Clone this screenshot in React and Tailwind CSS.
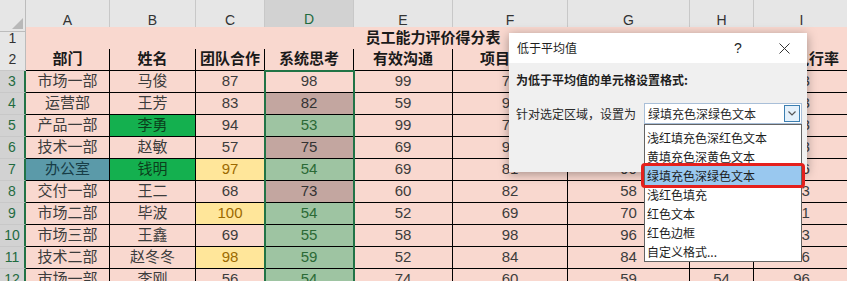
import React from 'react';
import clsx from 'clsx';

const grid = 'grid grid-cols-[26px_84px_86px_69px_89px_99px_115px_122px_64px_96px] w-[850px]';

const letters = ['A', 'B', 'C', 'D', 'E', 'F', 'G', 'H', 'I'];
const heads = ['部门', '姓名', '团队合作', '系统思考', '有效沟通', '项目管理', '创新能力', '学习力', '计划执行率'];

// a/b/c = cell fills, d = state of the selected column
const rows = [
  { n: 3, v: ['市场一部', '马俊', '87', '98', '99', '76', '85', '90', '93'], d: 'active' },
  { n: 4, v: ['运营部', '王芳', '83', '82', '59', '95', '78', '88', '83'], d: 'hi' },
  { n: 5, v: ['产品一部', '李勇', '94', '53', '99', '72', '81', '67', '98'], d: 'low', b: 'green' },
  { n: 6, v: ['技术一部', '赵敏', '57', '75', '69', '93', '66', '79', '88'], d: 'hi' },
  { n: 7, v: ['办公室', '钱明', '97', '54', '69', '81', '90', '58', '76'], d: 'low', a: 'teal', b: 'green', c: 'yellow' },
  { n: 8, v: ['交付一部', '王二', '68', '73', '60', '82', '58', '91', '83'], d: 'hi' },
  { n: 9, v: ['市场二部', '毕波', '100', '54', '52', '69', '70', '87', '91'], d: 'low', c: 'yellow' },
  { n: 10, v: ['市场三部', '王鑫', '69', '55', '58', '98', '96', '62', '73'], d: 'low' },
  { n: 11, v: ['技术二部', '赵冬冬', '98', '59', '52', '84', '84', '85', '86'], d: 'low', c: 'yellow' },
  { n: 12, v: ['市场一部', '李刚', '56', '54', '74', '60', '59', '54', '96'], d: 'low' },
];

const options = [
  '浅红填充色深红色文本',
  '黄填充色深黄色文本',
  '绿填充色深绿色文本',
  '浅红色填充',
  '红色文本',
  '红色边框',
  '自定义格式...',
];

function fillClass(fill) {
  if (fill === 'green') return 'bg-[#14b04f] text-[#0b3f1c]';
  if (fill === 'teal') return 'bg-[#5b9aa9] text-[#173d47]';
  if (fill === 'yellow') return 'bg-[#ffe69a] text-[#9c6a00]';
  return 'bg-[#f9d8cf] text-[#3c3c3c]';
}

function dClass(state) {
  if (state === 'hi') return 'bg-[#c3a6a0] text-[#333333]';
  if (state === 'low') return 'bg-[#9ec4a2] text-[#2b6a36]';
  return 'bg-[#f9d8cf] text-[#3c3c3c]';
}

const ColumnHeader = () => (
  <div className={clsx(grid, 'h-[27px] bg-[#e6e6e6]')}>
    <div className="relative border-r border-b border-[#bcbcbc]">
      <svg width="11" height="11" className="absolute right-[2px] bottom-[2px]">
        <path d="M11 0 L11 11 L0 11 Z" fill="#b8b8b8" />
      </svg>
    </div>
    {letters.map((l) => (
      <div
        key={l}
        className={clsx(
          'flex items-center justify-center pt-[9px] text-[14px] border-r border-[#c8c8c8] [font-family:\'Liberation_Serif\',serif]',
          l === 'D'
            ? 'bg-[#d2d2d2] text-[#1f6b3f] border-b-2 border-b-[#217346]'
            : 'text-[#333333] border-b border-b-[#bcbcbc]'
        )}
      >
        {l}
      </div>
    ))}
  </div>
);

const RowNum = ({ n, sel }) => (
  <div
    className={clsx(
      'flex items-center justify-center text-[14px] border-b border-b-[#c8c8c8]',
      sel
        ? 'bg-[#d2d2d2] text-[#1f6b3f] border-r-2 border-r-[#217346]'
        : 'bg-[#e6e6e6] text-[#333333] border-r border-r-[#bcbcbc]'
    )}
  >
    {n}
  </div>
);

const DataRow = ({ r }) => (
  <div className={clsx(grid, 'h-[22px]')}>
    <RowNum n={r.n} sel />
    {r.v.map((val, i) => (
      <div
        key={i}
        className={clsx(
          'flex items-center justify-center text-[15px] border-r border-b border-black whitespace-nowrap overflow-hidden',
          i === 0 && fillClass(r.a),
          i === 1 && fillClass(r.b),
          i === 2 && fillClass(r.c),
          i === 3 && dClass(r.d),
          i > 3 && fillClass()
        )}
      >
        {val}
      </div>
    ))}
  </div>
);

const Dialog = () => (
  <div className="absolute left-[509px] top-[33px] w-[298px] h-[139px] bg-[#f0f0f0] shadow-[0_2px_10px_rgba(0,0,0,0.35)] [font-family:'Noto_Sans_CJK_SC',sans-serif] text-[12px] text-[#1e1e1e]">
    <div className="h-[30px] bg-white flex items-center pl-[8px]">
      <span>低于平均值</span>
      <span className="ml-auto w-[40px] text-center text-[14px] [font-family:'Liberation_Sans',sans-serif]">?</span>
      <span className="ml-[3px] w-[46px] flex justify-center">
        <svg width="11" height="11" viewBox="0 0 11 11">
          <path d="M0.5 0.5 L10.5 10.5 M10.5 0.5 L0.5 10.5" stroke="#333" strokeWidth="1" />
        </svg>
      </span>
    </div>
    <div className="pl-[7px] pt-[8px]">
      <div className="font-bold leading-[18px] whitespace-nowrap">为低于平均值的单元格设置格式:</div>
      <div className="mt-[14px] h-[21px] flex items-center">
        <div className="w-[128px] whitespace-nowrap text-[#2a2a2a]">针对选定区域，设置为</div>
        <div className="w-[158px] h-[21px] flex items-center bg-white border border-[#a9bfd8]">
          <span className="pl-[3px] whitespace-nowrap text-[#2a2a2a]">绿填充色深绿色文本</span>
          <span className="ml-auto mr-[1px] w-[16px] h-[17px] flex items-center justify-center bg-[#e5f1fb] border border-[#3c7fb1]">
            <svg width="8" height="5" viewBox="0 0 8 5">
              <path d="M0.5 0.5 L4 4 L7.5 0.5" fill="none" stroke="#555" strokeWidth="1.2" />
            </svg>
          </span>
        </div>
      </div>
    </div>
  </div>
);

const Dropdown = () => (
  <>
    <div className="absolute left-[644px] top-[124px] w-[158px] h-[138px] bg-white border border-[#646464] pt-[3px] [font-family:'Noto_Sans_CJK_SC',sans-serif] text-[12px] text-[#1e1e1e]">
      {options.map((o, i) => (
        <div key={o} className={clsx('h-[19px] leading-[19px] pl-[2px] whitespace-nowrap', i === 2 && 'bg-[#99c8ef]')}>
          {o}
        </div>
      ))}
    </div>
    <div className="absolute left-[641px] top-[163px] w-[164px] h-[25px] border-[3px] border-[#e5201c] rounded-[4px]" />
  </>
);

export default function App() {
  return (
    <div className="relative w-[847px] h-[281px] overflow-hidden bg-white [font-family:'Liberation_Sans','Noto_Sans_CJK_SC',sans-serif]">
      <ColumnHeader />

      <div className={clsx(grid, 'h-[22px]')}>
        <RowNum n={1} />
        <div className="col-span-9 flex items-center justify-center pr-[10px] bg-[#f9d8cf] border-b border-black text-[15px] font-bold text-[#1a1a1a]">
          员工能力评价得分表
        </div>
      </div>

      <div className={clsx(grid, 'h-[22px]')}>
        <RowNum n={2} />
        {heads.map((h) => (
          <div
            key={h}
            className="flex items-center justify-center bg-[#f9d8cf] border-r border-b border-black text-[15px] font-bold text-[#1a1a1a] whitespace-nowrap overflow-hidden"
          >
            {h}
          </div>
        ))}
      </div>

      {rows.map((r) => (
        <DataRow key={r.n} r={r} />
      ))}

      {/* selected range D3:D12 */}
      <div className="absolute left-[264px] top-[70px] w-[91px] h-[230px] border-2 border-[#217346]" />

      <Dialog />
      <Dropdown />
    </div>
  );
}
